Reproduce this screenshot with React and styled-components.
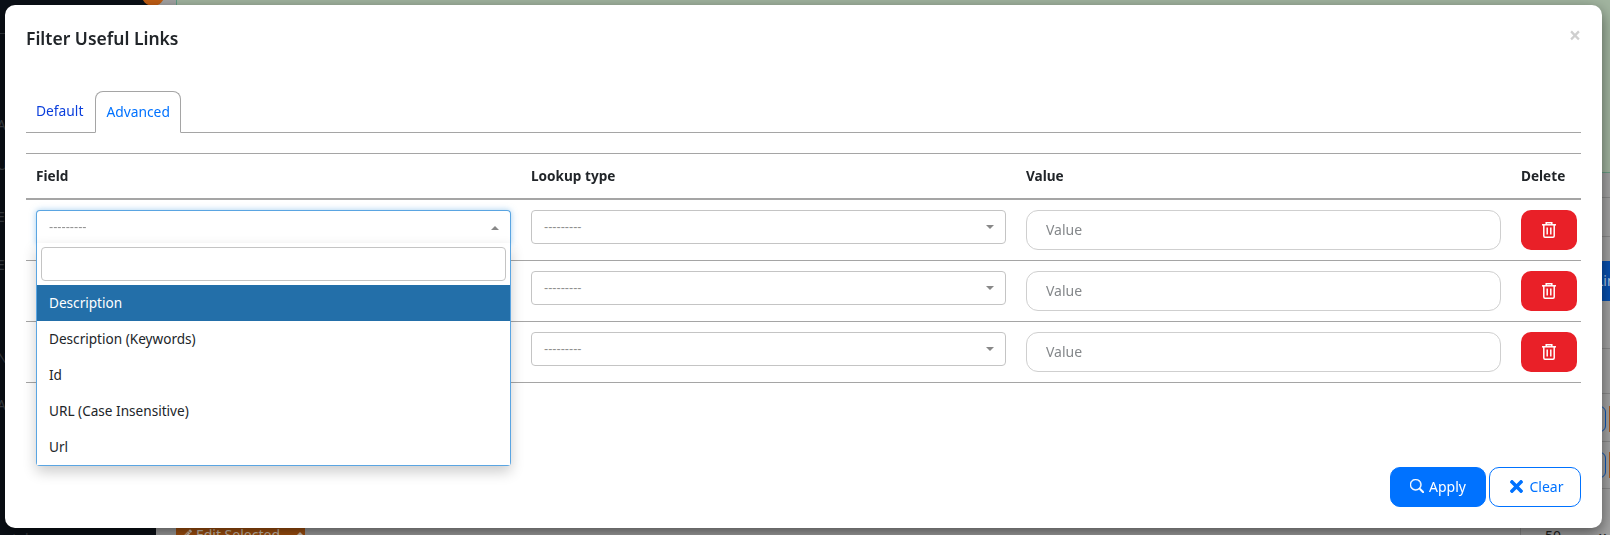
import React from "react";
import styled, { createGlobalStyle } from "styled-components";
import { FaTimes, FaPencilAlt } from "react-icons/fa";
import { BsSearch } from "react-icons/bs";

const GlobalStyle = createGlobalStyle`
  html, body {
    margin: 0;
    height: 100%;
    overflow: hidden;
    font-family: "Noto Sans", "Open Sans", sans-serif;
  }
  * { box-sizing: border-box; }
`;

const Page = styled.div`
  display: grid;
  grid-template-columns: 156px 1fr;
  height: 100vh;
  overflow: hidden;
`;

/* what shows behind the modal, already dimmed by the backdrop */
const Sidebar = styled.div`
  position: relative;
  background: #0b1017;
  color: #3c4147;
  font-size: 14px;
`;

const SideRule = styled.div`
  height: 1px;
  margin-top: 33px;
  background: #33383e;
`;

const SideItem = styled.div`
  margin-left: -3px;
  height: ${(p) => p.$h}px;
  display: flex;
  align-items: flex-end;
  line-height: 17px;
`;

const SideFoot = styled(SideItem)`
  margin-left: 12px;
`;

const Avatar = styled.div`
  position: absolute;
  top: -20px;
  right: -9px;
  width: 24px;
  height: 26px;
  border-radius: 50%;
  background: #c25e14;
`;

const Main = styled.div`
  display: flex;
  flex-direction: column;
  background: #a4a4a4;
  padding-left: 20px;
  min-width: 0;
`;

const Banner = styled.div`
  height: 173px;
  flex: none;
  background: #a2b5a0;
  border-left: 1px solid #5f9d87;
  border-bottom: 1px solid #6b9f86;
`;

const BackRow = styled.div`
  height: ${(p) => p.$h}px;
  flex: none;
  display: flex;
  justify-content: ${(p) => (p.$start ? "flex-start" : "flex-end")};
  align-items: flex-start;
  padding-top: ${(p) => p.$pad || 0}px;
  border-bottom: ${(p) => (p.$line ? "1px solid #8b8b8b" : "none")};
`;

const BlueBar = styled.div`
  width: 30px;
  height: 40px;
  margin-right: -10px;
  padding-left: 6px;
  flex: none;
  background: #0750b0;
  color: #b4c8e4;
  font-size: 14px;
  line-height: 40px;
  white-space: nowrap;
  overflow: hidden;
`;

const OutlineStub = styled.div`
  width: 20px;
  height: 26px;
  border: 1px solid #0a56b8;
  border-radius: 6px;
  flex: none;
`;

const OrangeStub = styled.div`
  width: 8px;
  height: 26px;
  margin-left: 3px;
  margin-right: -7px;
  background: #ab5a1c;
  flex: none;
`;

const EditButton = styled.div`
  width: 129px;
  height: 30px;
  display: flex;
  align-items: center;
  gap: 4px;
  padding-left: 7px;
  background: #a8530f;
  color: #d6c8b8;
  font-size: 14px;
  white-space: nowrap;
`;

const EditCaret = styled.span`
  margin-left: 11px;
  width: 0;
  height: 0;
  border-left: 5px solid transparent;
  border-right: 5px solid transparent;
  border-bottom: 5px solid #d6c8b8;
`;

const BottomCount = styled.div`
  position: absolute;
  left: 1520px;
  top: 526px;
  height: 20px;
  padding-left: 24px;
  border-left: 1px solid #8b8b8b;
  color: #1c1c1c;
  font-size: 14px;
`;

const BottomClose = styled.div`
  position: absolute;
  left: 1598px;
  top: 526px;
  color: #1c1c1c;
  font-size: 16px;
  font-weight: 700;
`;

const Modal = styled.div`
  position: fixed;
  left: 5px;
  top: 5px;
  width: 1597px;
  height: 523px;
  padding: 0 21px;
  background: #fff;
  border-radius: 10px;
  box-shadow: 0 5px 15px rgba(0, 0, 0, 0.5);
  color: #212529;
`;

const ModalHeader = styled.div`
  height: 86px;
  padding-top: 20px;
  display: flex;
  justify-content: space-between;
  align-items: flex-start;
`;

const Title = styled.h5`
  margin: 0;
  font-size: 17.5px;
  font-weight: 600;
  line-height: 26px;
`;

const CloseX = styled.span`
  color: #cfcfcf;
  font-size: 21px;
  font-weight: 700;
  line-height: 20px;
`;

const TabBar = styled.div`
  display: flex;
  gap: 2px;
  height: 42px;
  border-bottom: 1px solid #a5a5a5;
`;

const Tab = styled.div`
  height: ${(p) => (p.$active ? "42px" : "41px")};
  padding: 9px 10px;
  font-size: 13.8px;
  line-height: 22px;
  color: ${(p) => (p.$active ? "#0072ff" : "#0b3fdc")};
  background: #fff;
  ${(p) =>
    p.$active &&
    `border: 1px solid #a5a5a5;
     border-bottom-color: #fff;
     border-radius: 8px 8px 0 0;`}
`;

const Table = styled.div`
  margin-top: 20px;
  border-top: 1px solid #a5a5a5;
`;

const HeadRow = styled.div`
  display: grid;
  grid-template-columns: 495px 495px 495px 70px;
  height: 46px;
  padding-bottom: 1px;
  align-items: center;
  border-bottom: 2px solid #a5a5a5;
  font-size: 13.6px;
  font-weight: 700;
  color: #212529;
`;

const HeadCell = styled.div`
  padding-left: 10px;
`;

const BodyRow = styled.div`
  display: grid;
  grid-template-columns: 495px 495px 495px 70px;
  height: 61px;
  border-bottom: 1px solid #a5a5a5;
`;

const Cell = styled.div`
  padding: 10px 10px 0;
`;

const DeleteCell = styled(Cell)`
  padding-right: 4px;
`;

const Select = styled.div`
  position: relative;
  height: 34px;
  display: flex;
  justify-content: space-between;
  align-items: center;
  padding: 0 11px 0 12px;
  background: #fff;
  border: 1px solid ${(p) => (p.$open ? "#5aa5e2" : "#c4c4c4")};
  border-radius: 4px;
  ${(p) =>
    p.$open &&
    `border-bottom: none;
     border-radius: 4px 4px 0 0;
     box-shadow: 0 0 6px rgba(90, 165, 226, 0.55);`}
`;

const Dashes = styled.span`
  color: #8f8f8f;
  font-family: "Liberation Sans", sans-serif;
  font-size: 12.5px;
  line-height: 18px;
  padding-bottom: 1px;
`;

const Caret = styled.span`
  width: 0;
  height: 0;
  border-left: 4px solid transparent;
  border-right: 4px solid transparent;
  ${(p) =>
    p.$up ? "border-bottom: 4px solid #888;" : "border-top: 4px solid #888;"}
`;

const Dropdown = styled.div`
  position: absolute;
  z-index: 5;
  left: -1px;
  right: -1px;
  top: calc(100% - 1px);
  background: #fff;
  border: 1px solid #5aa5e2;
  border-top: none;
  border-radius: 0 0 4px 4px;
  box-shadow: 0 6px 14px rgba(0, 0, 0, 0.2);
`;

const SearchWrap = styled.div`
  padding: 4px;
  height: 42px;
`;

const SearchInput = styled.input`
  display: block;
  width: 100%;
  height: 34px;
  border: 1px solid #c4c4c4;
  border-radius: 4px;
  outline: none;
`;

const Option = styled.div`
  height: 36px;
  padding-left: 12px;
  font-size: 13.6px;
  line-height: 36px;
  color: ${(p) => (p.$selected ? "#fff" : "#212529")};
  background: ${(p) => (p.$selected ? "#236fa9" : "#fff")};
`;

const ValueInput = styled.input`
  display: block;
  width: 100%;
  height: 40px;
  padding: 0 19px 2px;
  border: 1px solid #cfcfcf;
  border-radius: 12px;
  font-family: inherit;
  font-size: 14px;
  outline: none;
  &::placeholder {
    color: #85888b;
  }
`;

const DeleteButton = styled.button`
  display: flex;
  align-items: center;
  justify-content: center;
  width: 56px;
  height: 40px;
  padding: 0;
  border: none;
  border-radius: 10px;
  background: #e92028;
  color: #fff;
`;

const Footer = styled.div`
  margin-top: 84px;
  display: flex;
  justify-content: flex-end;
  gap: 3px;
`;

const ActionButton = styled.button`
  display: flex;
  align-items: center;
  justify-content: center;
  gap: ${(p) => (p.$outline ? 4 : 5)}px;
  width: ${(p) => (p.$outline ? 92 : 96)}px;
  height: 40px;
  padding: 0 0 2px;
  border: 1px solid #0072ff;
  border-radius: 10px;
  background: ${(p) => (p.$outline ? "#fff" : "#0072ff")};
  color: ${(p) => (p.$outline ? "#0072ff" : "#fff")};
  font-family: inherit;
  font-size: 14px;
`;

const TrashIcon = () => (
  <svg width="14" height="16" viewBox="0 0 14 16" fill="none" stroke="currentColor" strokeWidth="1.5">
    <path d="M0 2.8h14" />
    <path d="M4.2 2.8V.8h5.6v2" />
    <path d="M1.8 2.8v11.2c0 .7.5 1.2 1.2 1.2h8c.7 0 1.2-.5 1.2-1.2V2.8" />
    <path d="M5.2 5.6v6.8M8.8 5.6v6.8" />
  </svg>
);

const options = [
  "Description",
  "Description (Keywords)",
  "Id",
  "URL (Case Insensitive)",
  "Url",
];

const FilterRow = ({ open }) => (
  <BodyRow>
    <Cell>
      <Select $open={open}>
        <Dashes>---------</Dashes>
        <Caret $up={open} />
        {open && (
          <Dropdown>
            <SearchWrap>
              <SearchInput />
            </SearchWrap>
            {options.map((o, i) => (
              <Option key={o} $selected={i === 0}>
                {o}
              </Option>
            ))}
          </Dropdown>
        )}
      </Select>
    </Cell>
    <Cell>
      <Select>
        <Dashes>---------</Dashes>
        <Caret />
      </Select>
    </Cell>
    <Cell>
      <ValueInput placeholder="Value" />
    </Cell>
    <DeleteCell>
      <DeleteButton>
        <TrashIcon />
      </DeleteButton>
    </DeleteCell>
  </BodyRow>
);

const App = () => {
  return (
    <>
      <GlobalStyle />
      <Page>
        <Sidebar>
          <SideRule />
          <SideItem $h={99}>A</SideItem>
          <SideItem $h={40}>U</SideItem>
          <SideItem $h={52}>E</SideItem>
          <SideItem $h={48}>E</SideItem>
          <SideItem $h={93}>N</SideItem>
          <SideItem $h={47}>A</SideItem>
          <SideFoot $h={134}>tal</SideFoot>
          <Avatar />
        </Sidebar>
        <Main>
          <Banner />
          <BackRow $h={25} $line />
          <BackRow $h={39} $line />
          <BackRow $h={112} $pad={24} $line>
            <BlueBar>Links</BlueBar>
          </BackRow>
          <BackRow $h={45} $line />
          <BackRow $h={48} $pad={12} $line>
            <OutlineStub />
            <OrangeStub />
          </BackRow>
          <BackRow $h={47} $pad={10} $line>
            <OutlineStub />
            <OrangeStub />
          </BackRow>
          <BackRow $h={46} $pad={30} $start>
            <EditButton>
              <FaPencilAlt size={12} />
              Edit Selected
              <EditCaret />
            </EditButton>
          </BackRow>
        </Main>
      </Page>
      <BottomCount>50</BottomCount>
      <BottomClose>×</BottomClose>
      <Modal>
        <ModalHeader>
          <Title>Filter Useful Links</Title>
          <CloseX>×</CloseX>
        </ModalHeader>
        <TabBar>
          <Tab>Default</Tab>
          <Tab $active>Advanced</Tab>
        </TabBar>
        <Table>
          <HeadRow>
            <HeadCell>Field</HeadCell>
            <HeadCell>Lookup type</HeadCell>
            <HeadCell>Value</HeadCell>
            <HeadCell>Delete</HeadCell>
          </HeadRow>
          <FilterRow open />
          <FilterRow />
          <FilterRow />
        </Table>
        <Footer>
          <ActionButton>
            <BsSearch size={14} strokeWidth={0.6} />
            Apply
          </ActionButton>
          <ActionButton $outline>
            <FaTimes size={19} />
            Clear
          </ActionButton>
        </Footer>
      </Modal>
    </>
  );
};

export default App;
